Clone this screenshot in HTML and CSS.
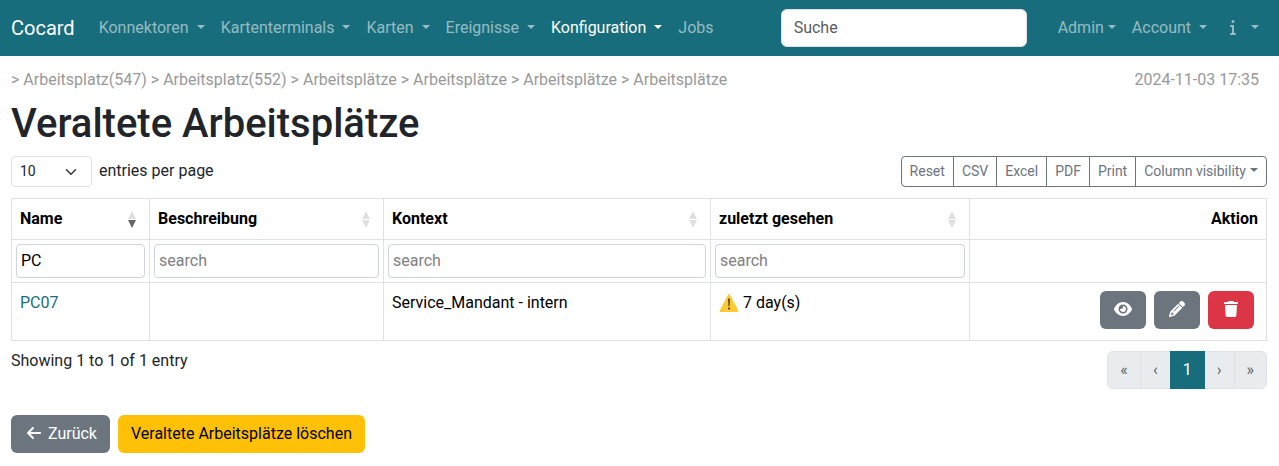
FILE: index.html
```html
<!DOCTYPE html>
<html lang="de">
<head>
<meta charset="utf-8">
<meta name="viewport" content="width=device-width, initial-scale=1">
<title>Veraltete Arbeitsplätze</title>
<link rel="stylesheet" href="styles.css">
</head>
<body>
<nav class="navbar">
  <a class="brand" href="#">Cocard</a>
  <ul class="nav nav-main">
    <li><a class="nav-link" href="#">Konnektoren <span class="caret"></span></a></li>
    <li><a class="nav-link" href="#">Kartenterminals <span class="caret"></span></a></li>
    <li><a class="nav-link" href="#">Karten <span class="caret"></span></a></li>
    <li><a class="nav-link" href="#">Ereignisse <span class="caret"></span></a></li>
    <li><a class="nav-link active" href="#">Konfiguration <span class="caret"></span></a></li>
    <li><a class="nav-link" href="#">Jobs</a></li>
  </ul>
  <form class="search" role="search">
    <input class="search-input" type="search" placeholder="Suche" aria-label="Suche">
  </form>
  <ul class="nav">
    <li><a class="nav-link" href="#">Admin<span class="caret"></span></a></li>
    <li><a class="nav-link" href="#">Account <span class="caret"></span></a></li>
    <li><a class="nav-link" href="#" aria-label="Info"><svg class="icon" viewBox="-112 0 416 512"><path d="M48 80a48 48 0 1 1 96 0A48 48 0 1 1 48 80zM0 224c0-17.700 14.300-32 32-32H96c17.700 0 32 14.300 32 32V448h32c17.700 0 32 14.300 32 32s-14.300 32-32 32H32c-17.700 0-32-14.300-32-32s14.300-32 32-32H64V256H32c-17.700 0-32-14.300-32-32z"/></svg> <span class="caret"></span></a></li>
  </ul>
</nav>
<main class="page">
  <div class="crumb-bar">
    <div class="crumbs">&gt; <a href="#">Arbeitsplatz(547)</a> &gt; <a href="#">Arbeitsplatz(552)</a> &gt; <a href="#">Arbeitsplätze</a> &gt; <a href="#">Arbeitsplätze</a> &gt; <a href="#">Arbeitsplätze</a> &gt; <a href="#">Arbeitsplätze</a></div>
    <time class="stamp" datetime="2024-11-03T17:35">2024-11-03 17:35</time>
  </div>
  <h1 class="title">Veraltete Arbeitsplätze</h1>
  <div class="toolbar">
    <div class="length">
      <select class="length-select" id="page-length"><option>10</option><option>25</option><option>50</option></select>
      <label for="page-length">entries per page</label>
    </div>
    <div class="btn-group">
      <button class="btn-outline" type="button">Reset</button>
      <button class="btn-outline" type="button">CSV</button>
      <button class="btn-outline" type="button">Excel</button>
      <button class="btn-outline" type="button">PDF</button>
      <button class="btn-outline" type="button">Print</button>
      <button class="btn-outline" type="button">Column visibility<span class="caret"></span></button>
    </div>
  </div>
  <table class="grid">
    <colgroup><col class="col-name"><col class="col-desc"><col class="col-context"><col class="col-seen"><col></colgroup>
    <thead>
      <tr>
        <th aria-sort="descending"><div class="head">Name<svg class="sort sort-desc" viewBox="0 0 8 17"><path d="M4 0L8 8H0z"/><path class="down" d="M0 9H8L4 17z"/></svg></div></th>
        <th><div class="head">Beschreibung<svg class="sort" viewBox="0 0 8 17"><path d="M4 0L8 8H0z"/><path d="M0 9H8L4 17z"/></svg></div></th>
        <th><div class="head">Kontext<svg class="sort" viewBox="0 0 8 17"><path d="M4 0L8 8H0z"/><path d="M0 9H8L4 17z"/></svg></div></th>
        <th><div class="head">zuletzt gesehen<svg class="sort" viewBox="0 0 8 17"><path d="M4 0L8 8H0z"/><path d="M0 9H8L4 17z"/></svg></div></th>
        <th class="right">Aktion</th>
      </tr>
      <tr class="filters">
        <td><input class="filter" type="text" value="PC" placeholder="search" aria-label="Name"></td>
        <td><input class="filter" type="text" placeholder="search" aria-label="Beschreibung"></td>
        <td><input class="filter" type="text" placeholder="search" aria-label="Kontext"></td>
        <td><input class="filter" type="text" placeholder="search" aria-label="zuletzt gesehen"></td>
        <td></td>
      </tr>
    </thead>
    <tbody>
      <tr>
        <td><a class="link" href="#">PC07</a></td>
        <td></td>
        <td>Service_Mandant - intern</td>
        <td><svg class="warn" viewBox="0 0 20 18" role="img" aria-label="Warnung"><path fill="#fcc934" d="M9.200 .6Q10 -.4 10.800 .6L19.300 16.600Q19.700 17.900 18.500 18H1.500Q.3 17.900 .7 16.600z"/><path fill="#2f2f2f" d="M9.200 4.800Q10 4 10.800 4.800L10.500 12.300H9.500z"/><circle cx="10" cy="14.500" r="1" fill="#2f2f2f"/></svg> 7 day(s)</td>
        <td>
          <div class="actions">
            <a class="btn btn-gray" href="#" aria-label="Anzeigen"><svg class="icon" viewBox="-32 0 640 512"><path d="M288 32c-80.800 0-145.500 36.800-192.600 80.600C48.600 156 17.300 208 2.500 243.700c-3.300 7.900-3.300 16.700 0 24.600C17.300 304 48.600 356 95.400 399.400C142.500 443.200 207.200 480 288 480s145.500-36.800 192.600-80.600c46.800-43.500 78.100-95.400 93-131.100c3.300-7.900 3.300-16.700 0-24.600c-14.900-35.700-46.200-87.700-93-131.100C433.500 68.800 368.800 32 288 32zM144 256a144 144 0 1 1 288 0 144 144 0 1 1 -288 0zm144-64c0 35.300-28.700 64-64 64c-7.100 0-13.900-1.200-20.300-3.300c-5.500-1.800-11.900 1.600-11.700 7.400c.3 6.900 1.300 13.800 3.200 20.700c13.700 51.200 66.400 81.600 117.600 67.900s81.600-66.400 67.900-117.600c-11.100-41.500-47.800-69.400-88.600-71.100c-5.800-.2-9.200 6.100-7.400 11.700c2.100 6.400 3.300 13.200 3.300 20.300z"/></svg></a>
            <a class="btn btn-gray" href="#" aria-label="Bearbeiten"><svg class="icon" viewBox="-64 0 640 512"><path d="M410.300 231l11.300-11.300-33.900-33.900-62.100-62.100L291.700 89.800l-11.300 11.300-22.600 22.600L58.600 322.900c-10.400 10.400-18 23.300-22.200 37.400L1 480.700c-2.500 8.400-.2 17.500 6.100 23.700s15.300 8.500 23.700 6.100l120.300-35.400c14.100-4.200 27-11.800 37.400-22.200L387.700 253.700 410.300 231zM160 399.400l-9.100 22.700c-4 3.100-8.500 5.400-13.300 6.900L59.400 452l23-78.100c1.400-4.900 3.800-9.400 6.900-13.300l22.700-9.100v32c0 8.800 7.200 16 16 16h32zM362.700 18.700L348.300 33.200 325.700 55.800 314.300 67.100l33.900 33.900 62.100 62.100 33.900 33.900 11.300-11.300 22.600-22.600 14.500-14.500c25-25 25-65.500 0-90.500L453.300 18.700c-25-25-65.500-25-90.500 0zm-47.400 168l-144 144c-6.200 6.200-16.400 6.200-22.600 0s-6.200-16.400 0-22.600l144-144c6.200-6.200 16.400-6.200 22.600 0s6.200 16.400 0 22.600z"/></svg></a>
            <button class="btn btn-red" type="button" aria-label="Löschen"><svg class="icon" viewBox="-96 0 640 512"><path d="M135.200 17.700L128 32H32C14.300 32 0 46.300 0 64S14.300 96 32 96H416c17.700 0 32-14.300 32-32s-14.300-32-32-32H320l-7.200-14.300C307.400 6.800 296.300 0 284.200 0H163.800c-12.100 0-23.200 6.800-28.600 17.700zM416 128H32L53.200 467c1.600 25.300 22.600 45 47.900 45H346.900c25.300 0 46.300-19.700 47.900-45L416 128z"/></svg></button>
          </div>
        </td>
      </tr>
    </tbody>
  </table>
  <div class="table-foot">
    <div>Showing 1 to 1 of 1 entry</div>
    <nav class="pager" aria-label="pagination">
      <button class="page-btn" type="button" disabled>«</button>
      <button class="page-btn" type="button" disabled>‹</button>
      <button class="page-btn current" type="button">1</button>
      <button class="page-btn" type="button" disabled>›</button>
      <button class="page-btn" type="button" disabled>»</button>
    </nav>
  </div>
  <div class="page-actions">
    <a class="btn btn-gray" href="#"><svg class="icon" viewBox="-96 0 640 512"><path d="M9.400 233.400c-12.500 12.500-12.500 32.800 0 45.300l160 160c12.500 12.500 32.800 12.500 45.300 0s12.500-32.800 0-45.300L109.200 288 416 288c17.700 0 32-14.300 32-32s-14.300-32-32-32l-306.700 0L214.600 118.600c12.500-12.500 12.500-32.800 0-45.300s-32.800-12.500-45.300 0l-160 160z"/></svg> Zurück</a>
    <button class="btn btn-yellow" type="button">Veraltete Arbeitsplätze löschen</button>
  </div>
</main>
</body>
</html>
```
FILE: styles.css
```css
*, *::before, *::after { box-sizing: border-box; }
body {
  margin: 0;
  background: #fff;
  color: #212529;
  font: 400 16px/24px Roboto, "Liberation Sans", sans-serif;
}
a { color: inherit; text-decoration: none; }
button, input, select { font: inherit; margin: 0; }
.caret {
  display: inline-block;
  margin-left: 4px;
  vertical-align: 4px;
  border: 4px solid transparent;
  border-top-color: currentColor;
  border-bottom: 0;
}
.icon {
  width: 20px;
  height: 16px;
  vertical-align: -2px;
  fill: currentColor;
}

.navbar {
  display: flex;
  align-items: center;
  padding: 8px 12px 8px 11px;
  background: #176d7c;
}
.brand { margin-right: 16px; color: #fff; font-size: 20px; line-height: 30px; }
.nav { display: flex; margin: 0; padding: 0; list-style: none; }
.nav-main { margin-right: auto; }
.nav-link {
  display: block;
  padding: 8px;
  color: rgba(255, 255, 255, .55);
  white-space: nowrap;
}
.nav-link.active { color: #fff; }
.search { margin-right: 23px; }
.search-input {
  display: block;
  width: 246px;
  height: 38px;
  padding: 5px 12px 7px;
  border: 1px solid #dee2e6;
  border-radius: 6px;
  background: #fff;
  color: #212529;
}
.search-input::placeholder { color: #595c5f; }

.page { padding: 12px 12px 12px 11px; }
.crumb-bar { display: flex; justify-content: space-between; color: #999; }
.stamp { margin-right: 8px; }
.title { margin: 8px 0; font-size: 40px; font-weight: 500; line-height: 48px; }
.toolbar { display: flex; justify-content: space-between; margin-bottom: 11px; }
.length { display: flex; align-items: baseline; gap: 7px; }
.length-select {
  width: 81px;
  height: 31px;
  padding: 4px 8px;
  border: 1px solid #dee2e6;
  border-radius: 4px;
  appearance: none;
  background: #fff url("data:image/svg+xml,%3Csvg xmlns='http://www.w3.org/2000/svg' viewBox='0 0 16 16'%3E%3Cpath fill='none' stroke='%23343a40' stroke-linecap='round' stroke-linejoin='round' stroke-width='2' d='m2 5 6 6 6-6'/%3E%3C/svg%3E") no-repeat right 14px center / 12px 12px;
  color: #212529;
  font-size: 14px;
  line-height: 21px;
}
.btn-group { display: flex; }
.btn-outline {
  padding: 4px 8px;
  border: 1px solid #6c757d;
  background: #fff;
  color: #6c757d;
  font-size: 14px;
  line-height: 21px;
}
.btn-outline + .btn-outline { margin-left: -1px; }
.btn-outline:first-child { border-radius: 4px 0 0 4px; }
.btn-outline:last-child { border-radius: 0 4px 4px 0; }

.grid {
  width: 100%;
  border-collapse: collapse;
  table-layout: fixed;
  color: #000;
}
.col-name { width: 11%; }
.col-desc { width: 18.64%; }
.col-context { width: 26.06%; }
.col-seen { width: 20.64%; }
.grid th, .grid td {
  padding: 8px;
  border: 1px solid #dee2e6;
  text-align: left;
  vertical-align: top;
}
.grid th { font-weight: 700; }
.grid th.right { text-align: right; }
.head { display: flex; align-items: center; justify-content: space-between; padding-right: 5px; }
.sort { width: 8px; height: 17px; fill: #dfdfdf; }
.sort-desc .down { fill: #666; }
.grid .filters td { padding: 4px; }
.filter {
  display: block;
  width: 100%;
  height: 34px;
  padding: 3px 4px 5px;
  border: 1px solid #ced4da;
  border-radius: 4px;
  background: #fff;
  color: #000;
}
.filter::placeholder { color: #808080; }
.link { color: #176d7c; }
.warn { width: 20px; height: 18px; vertical-align: -4px; }
.actions { display: flex; justify-content: flex-end; gap: 8px; margin: 0 4px 3px 0; }
.btn {
  padding: 6px 12px;
  border: 1px solid transparent;
  border-radius: 6px;
  line-height: 24px;
  white-space: nowrap;
}
.btn-gray { background: #6c757d; color: #fff; }
.btn-red { background: #dc3545; color: #fff; }
.btn-yellow { background: #ffc107; color: #000; }

.table-foot { display: flex; justify-content: space-between; margin-top: 8px; }
.pager { display: flex; padding-top: 2px; }
.page-btn {
  padding: 6px 12px;
  border: 1px solid #dee2e6;
  background: #e9ecef;
  color: #595c5f;
}
.page-btn + .page-btn { margin-left: -1px; }
.page-btn:first-child { border-radius: 6px 0 0 6px; }
.page-btn:last-child { border-radius: 0 6px 6px 0; }
.page-btn.current { z-index: 1; border-color: #176d7c; background: #176d7c; color: #fff; }
.page-actions { display: flex; gap: 8px; margin-top: 26px; }
```
